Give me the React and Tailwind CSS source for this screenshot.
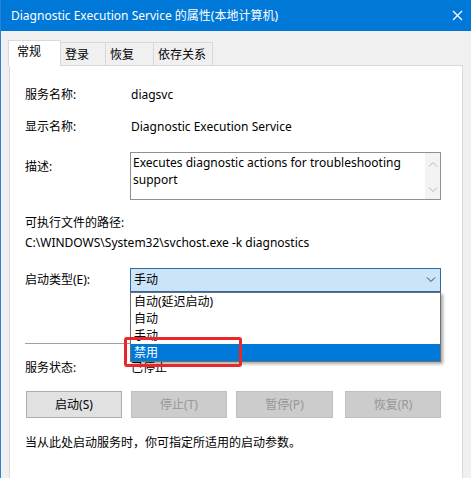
import React from "react";

const tabs = ["登录", "恢复", "依存关系"];
const tabWidths = ["w-[45px]", "w-[48px]", "w-[59px]"];
const options = ["自动(延迟启动)", "自动", "手动", "禁用"];

function Chevron({ className = "", up = false, color = "#333" }) {
  return (
    <svg width="10" height="6" viewBox="0 0 10 6" className={className}>
      <path
        d={up ? "M1 5.5 L5 1.5 L9 5.5" : "M1 0.5 L5 4.5 L9 0.5"}
        fill="none"
        stroke={color}
        strokeWidth="1"
      />
    </svg>
  );
}

export default function App() {
  return (
    <div className="w-[471px] h-[478px] overflow-hidden bg-[#f0f0f0] border-l border-[#2a80d2] text-[12px] text-black font-['Noto_Sans','Noto_Sans_CJK_SC',sans-serif]">
      {/* title bar */}
      <div className="h-[31px] bg-[#0078d7] grid grid-cols-[1fr_19px] items-center pl-[10px] text-white">
        <span className="leading-4 whitespace-nowrap">Diagnostic Execution Service 的属性(本地计算机)</span>
        <span className="flex items-center justify-start w-[19px] h-[31px]">
          <svg width="11" height="11" viewBox="0 0 11 11">
            <line x1="1" y1="1" x2="10" y2="10" stroke="white" strokeWidth="1.2" />
            <line x1="10" y1="1" x2="1" y2="10" stroke="white" strokeWidth="1.2" />
          </svg>
        </span>
      </div>

      {/* tabs */}
      <div className="mt-[9px] h-[25px] flex items-end pl-[7px]">
        <div className="relative z-10 w-[53px] h-[26px] -mb-px bg-white border-l border-t border-r border-[#d9d9d9] pl-[8px] pt-[3px] leading-4">
          常规
        </div>
        {tabs.map((t, i) => (
          <div
            key={t}
            className={`${tabWidths[i]} h-[23px] border-t border-r border-[#d9d9d9] pl-[4px] pt-[4px] leading-4`}
          >
            {t}
          </div>
        ))}
      </div>

      {/* panel */}
      <div className="ml-[8px] w-[454px] h-[420px] bg-white border border-[#d9d9d9] pl-[15px] pr-[21px] pt-[21px]">
        <div className="grid grid-cols-[106px_1fr] leading-4 h-4">
          <span>服务名称:</span>
          <span>diagsvc</span>
        </div>
        <div className="grid grid-cols-[106px_1fr] leading-4 h-4 mt-[16px]">
          <span>显示名称:</span>
          <span>Diagnostic Execution Service</span>
        </div>

        <div className="grid grid-cols-[105px_1fr] mt-[17px]">
          <span className="pt-[7px] leading-4">描述:</span>
          <div className="h-[48px] border border-[#8e8f8f] flex">
            <div className="flex-1 pl-[2px] pt-px leading-[17px]">
              Executes diagnostic actions for troubleshooting support
            </div>
            <div className="w-[15px] bg-[#f3f3f3] flex flex-col items-center justify-between pt-[8px] pb-[6px]">
              <Chevron up color="#b5b5b5" />
              <Chevron color="#b5b5b5" />
            </div>
          </div>
        </div>

        <div className="mt-[15px] leading-4 h-4">可执行文件的路径:</div>
        <div className="mt-[4px] leading-4 h-4">C:\WINDOWS\System32\svchost.exe -k diagnostics</div>

        <div className="grid grid-cols-[105px_1fr] items-center mt-[17px]">
          <span className="leading-4">启动类型(E):</span>
          <div className="relative">
            <div className="h-[24px] bg-[#cce4f7] border border-[#2e6ca8] flex items-center justify-between pl-[3px] pr-[4px]">
              <span className="leading-4">手动</span>
              <Chevron color="#3a3a3a" />
            </div>

            {/* open list */}
            <div className="absolute left-0 top-full w-full z-20 bg-white border border-[#707070] shadow-[2px_2px_3px_rgba(0,0,0,0.35)]">
              {options.map((o, i) => (
                <div
                  key={o}
                  className={`h-[17px] leading-[17px] pl-[3px] ${i === 3 ? "bg-[#0078d7] text-white" : ""}`}
                >
                  {o}
                </div>
              ))}
            </div>

            {/* highlight box */}
            <div className="absolute z-30 left-[-6px] top-[69px] w-[118px] h-[30px] border-[3px] border-[#e8272b] rounded-[3px]" />
          </div>
        </div>

        <div className="mt-[51px] h-px bg-[#a0a0a0]" />

        <div className="grid grid-cols-[106px_1fr] leading-4 h-4 mt-[16px]">
          <span>服务状态:</span>
          <span>已停止</span>
        </div>

        <div className="mt-[15px] flex">
          <button className="ml-px w-[96px] h-[27px] bg-[#e1e1e1] border border-[#adadad]">启动(S)</button>
          <button className="ml-[9px] w-[96px] h-[27px] bg-[#cccccc] border border-[#bfbfbf] text-[#979797]">停止(T)</button>
          <button className="ml-[9px] w-[97px] h-[27px] bg-[#cccccc] border border-[#bfbfbf] text-[#979797]">暂停(P)</button>
          <button className="ml-[12px] w-[96px] h-[27px] bg-[#cccccc] border border-[#bfbfbf] text-[#979797]">恢复(R)</button>
        </div>

        <div className="mt-[17px] leading-4 h-4">当从此处启动服务时，你可指定所适用的启动参数。</div>
      </div>
    </div>
  );
}
